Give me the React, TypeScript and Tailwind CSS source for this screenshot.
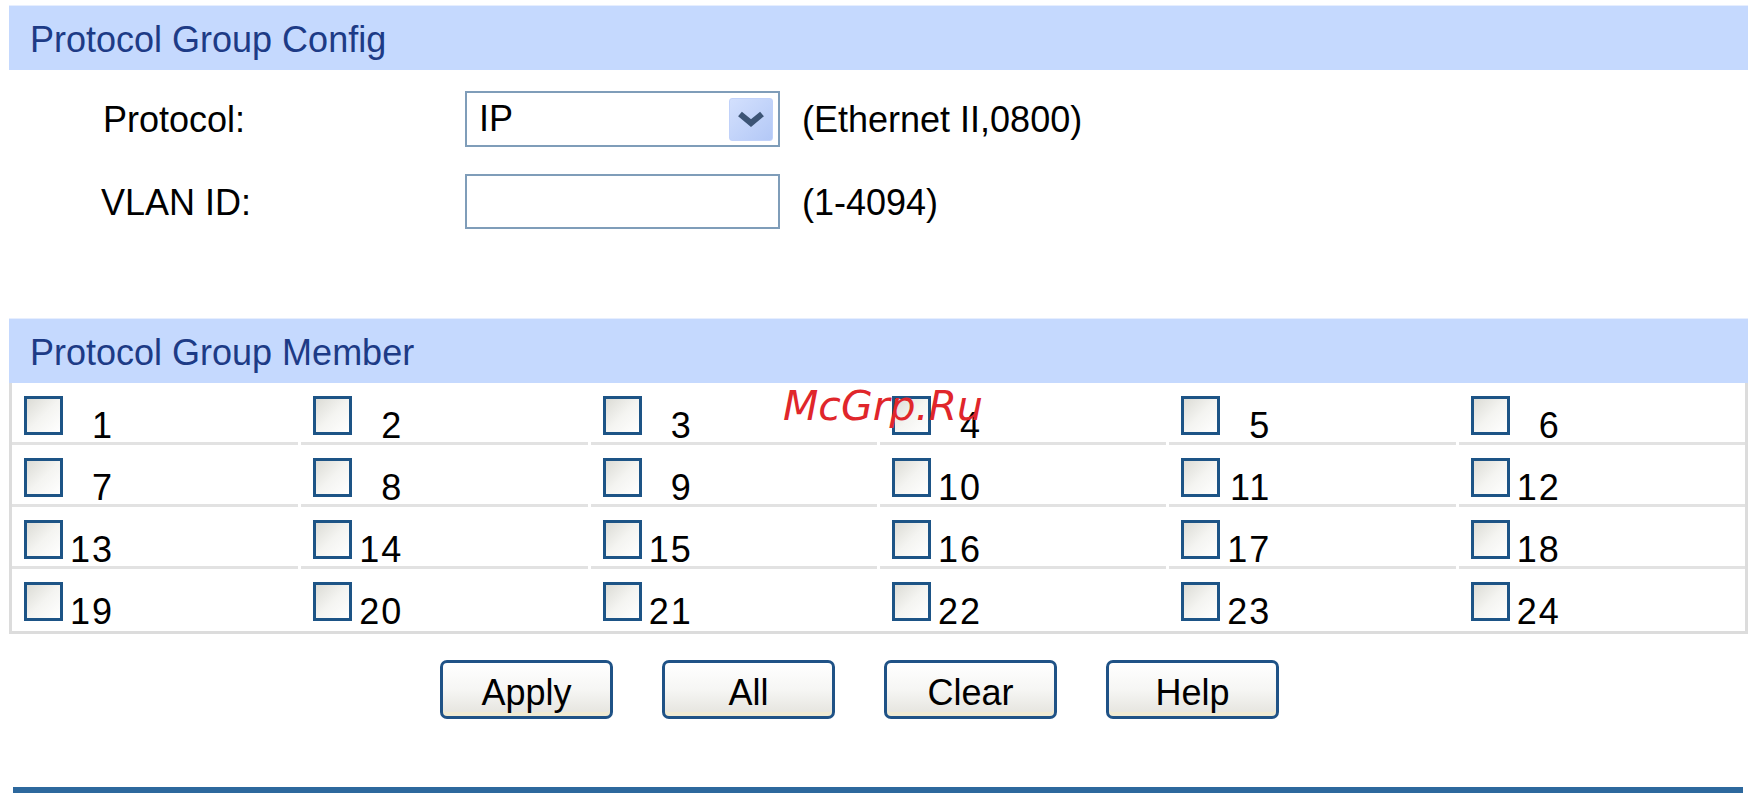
const ports = Array.from({ length: 24 }, (_, i) => i + 1);
const buttons = ["Apply", "All", "Clear", "Help"];

function SectionTitle({ title }: { title: string }) {
  return (
    <div className="ml-[9px] w-[1739px] h-[65px] bg-[#c5d9fe] flex items-center pl-[21px] pt-[4px] text-[36px] text-[#1d3b86] border-t border-[#e6eefe]">
      {title}
    </div>
  );
}

function Checkbox() {
  return (
    <span className="inline-block shrink-0 w-[39px] h-[39px] border-[3px] border-[#1d5486] bg-gradient-to-br from-[#dcdcd6] via-[#f4f4f1] to-white" />
  );
}

function XpButton({ label }: { label: string }) {
  return (
    <button className="w-[173px] h-[59px] pt-[6px] rounded-[7px] border-[3px] border-[#1f5286] bg-gradient-to-b from-white via-[#f6f6f4] to-[#e4e3dd] shadow-[inset_0_-4px_0_#f0ead2] text-[36px] text-black leading-none">
      {label}
    </button>
  );
}

export default function App() {
  return (
    <div className="relative w-[1756px] h-[808px] bg-white overflow-hidden font-['Liberation_Sans',Arial,sans-serif] text-black">
      <div className="h-[5px]" />
      <SectionTitle title="Protocol Group Config" />

      {/* config form */}
      <div className="ml-[9px] pt-[21px] flex flex-col gap-[27px] text-[36px]">
        <div className="flex items-center h-[56px]">
          <div className="w-[456px] pl-[94px] pt-[2px]">Protocol:</div>
          <div className="w-[315px] h-[56px] border-2 border-[#7f9db9] bg-white flex items-center justify-between pl-[12px] pr-[5px]">
            <span>IP</span>
            <span className="w-[44px] h-[43px] rounded-[3px] bg-gradient-to-br from-[#d3e0fd] to-[#b3c8f6] border border-[#c1d2fa] flex items-center justify-center">
              <svg width="30" height="18" viewBox="0 0 30 18">
                <path d="M4 4 L15 13 L26 4" fill="none" stroke="#3c5475" strokeWidth="6" />
              </svg>
            </span>
          </div>
          <div className="ml-[22px] pt-[2px]">(Ethernet II,0800)</div>
        </div>
        <div className="flex items-center h-[55px]">
          <div className="w-[456px] pl-[92px] pt-[2px]">VLAN ID:</div>
          <div className="w-[315px] h-[55px] border-2 border-[#7f9db9] bg-white" />
          <div className="ml-[22px] pt-[2px]">(1-4094)</div>
        </div>
      </div>

      <div className="h-[89px]" />
      <SectionTitle title="Protocol Group Member" />

      {/* port grid */}
      <div className="ml-[9px] w-[1739px] border-x-[3px] border-b-[3px] border-[#dcdcdc] grid grid-cols-6 gap-x-[3px]">
        {ports.map((p) => (
          <div
            key={p}
            className={`h-[62px] flex items-start pt-[13px] pl-[12px] ${
              p <= 18 ? "border-b-[3px] border-[#e2e2e2]" : ""
            }`}
          >
            <Checkbox />
            <span className="ml-[7px] w-[44px] text-right text-[36px] tracking-[2px] leading-none mt-[12px]">
              {p}
            </span>
          </div>
        ))}
      </div>

      <div className="flex gap-[49px] pl-[440px] pt-[26px]">
        {buttons.map((b) => (
          <XpButton key={b} label={b} />
        ))}
      </div>

      <div className="mt-[68px] mx-[13px] h-[6px] bg-[#2d689d]" />

      <div className="absolute left-[783px] top-[376px] text-[41px] italic text-[#e0262b] font-['DejaVu_Sans',sans-serif]">
        McGrp.Ru
      </div>
    </div>
  );
}
